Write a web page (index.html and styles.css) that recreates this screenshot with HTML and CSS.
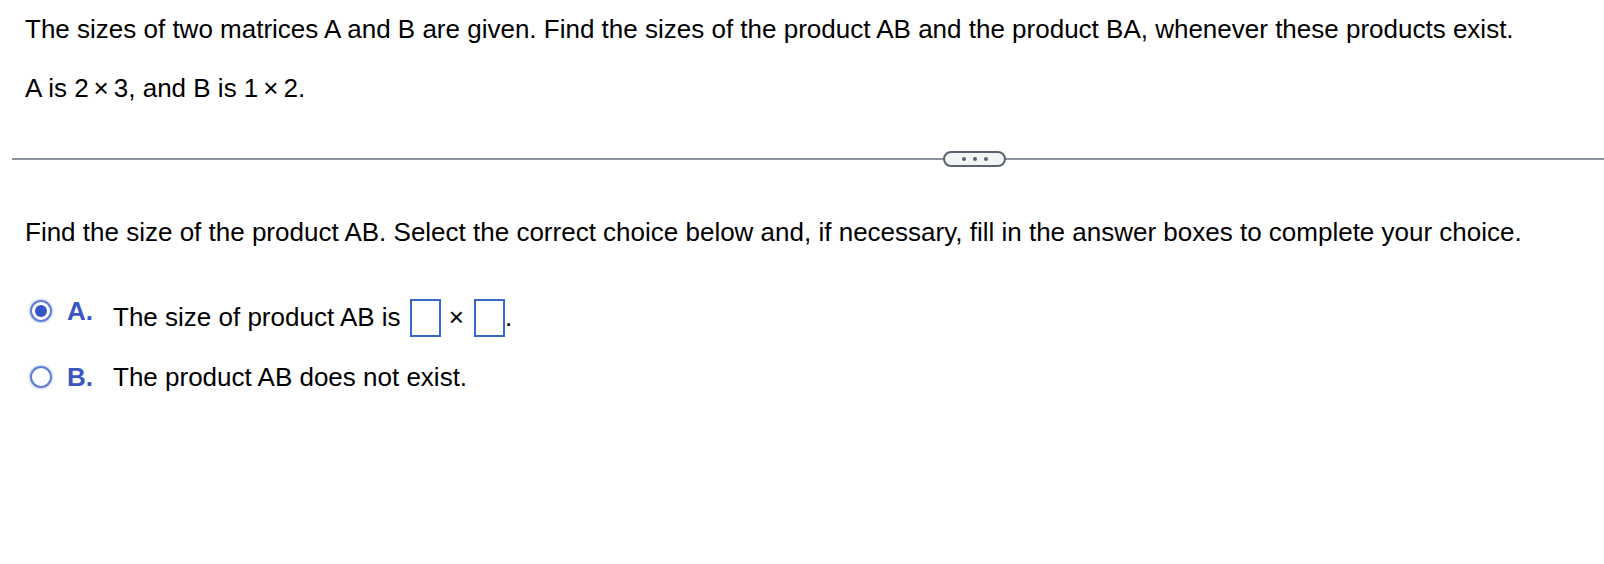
FILE: index.html
```html
<!DOCTYPE html>
<html>
<head>
<meta charset="utf-8">
<link rel="stylesheet" href="styles.css">
</head>
<body>
<div class="page">
  <section class="question">
    <p class="q-line">The sizes of two matrices A and B are given. Find the sizes of the product AB and the product BA, whenever these products exist.</p>
    <p class="q-line q-given">A is 2<span class="times">×</span>3, and B is 1<span class="times">×</span>2.</p>
  </section>
  <div class="divider">
    <div class="rule"></div>
    <div class="pill"><span class="dot"></span><span class="dot"></span><span class="dot"></span></div>
  </div>
  <section class="part">
    <p class="instr">Find the size of the product AB. Select the correct choice below and, if necessary, fill in the answer boxes to complete your choice.</p>
    <div class="choices">
      <div class="choice">
        <span class="radio checked"></span>
        <span class="letter">A.</span>
        <span class="ctext with-boxes">The size of product AB is <span class="box"></span><span class="x">×</span><span class="box"></span>.</span>
      </div>
      <div class="choice">
        <span class="radio"></span>
        <span class="letter">B.</span>
        <span class="ctext">The product AB does not exist.</span>
      </div>
    </div>
  </section>
</div>
</body>
</html>
```
FILE: styles.css
```css
html, body {
  margin: 0;
  padding: 0;
  background: #fff;
}
body {
  font-family: "Liberation Sans", Arial, sans-serif;
  color: #000;
}
.page {
  width: 1604px;
}
.question {
  padding: 14px 0 0 25px;
}
.q-line {
  margin: 0;
  font-size: 26px;
  line-height: 30px;
}
.q-given {
  margin-top: 29px;
}
.times {
  margin: 0 5px;
}
.divider {
  position: relative;
  margin: 48px 0 0 12px;
  height: 16px;
  display: flex;
  align-items: center;
}
.rule {
  flex: 1;
  height: 2px;
  background: #8b91a0;
}
.pill {
  position: absolute;
  left: 931px;
  top: 0;
  width: 59px;
  height: 12px;
  border: 2px solid #5b6372;
  border-radius: 9px;
  background: #f3f4f6;
  display: flex;
  align-items: center;
  justify-content: center;
  gap: 7px;
}
.dot {
  width: 4px;
  height: 4px;
  border-radius: 50%;
  background: #5b6372;
}
.part {
  padding: 50px 0 0 25px;
}
.instr {
  margin: 0;
  font-size: 26px;
  line-height: 30px;
}
.choices {
  margin-top: 45px;
  display: flex;
  flex-direction: column;
  gap: 28px;
}
.choice {
  display: flex;
  align-items: center;
  height: 38px;
  font-size: 26px;
}
.radio {
  flex: none;
  width: 22px;
  height: 22px;
  border: 2px solid #5f7fd6;
  border-radius: 50%;
  box-sizing: border-box;
  box-shadow: 0 0 2px 1px rgba(95, 127, 214, 0.35);
  margin-left: 5px;
  position: relative;
  background: #fff;
}
.radio.checked::after {
  content: "";
  position: absolute;
  left: 3px;
  top: 3px;
  width: 12px;
  height: 12px;
  border-radius: 50%;
  background: #3356c7;
}
.letter {
  color: #3a56c0;
  font-weight: bold;
  margin-left: 15px;
  width: 46px;
  flex: none;
}
.ctext {
  display: flex;
  align-items: center;
  white-space: pre;
}
.ctext.with-boxes {
  margin-top: 13px;
}
.box {
  display: inline-block;
  width: 27px;
  height: 34px;
  border: 2px solid #3b67c9;
  margin-left: 2px;
}
.x {
  margin: 0 8px;
  font-size: 26px;
}
```
